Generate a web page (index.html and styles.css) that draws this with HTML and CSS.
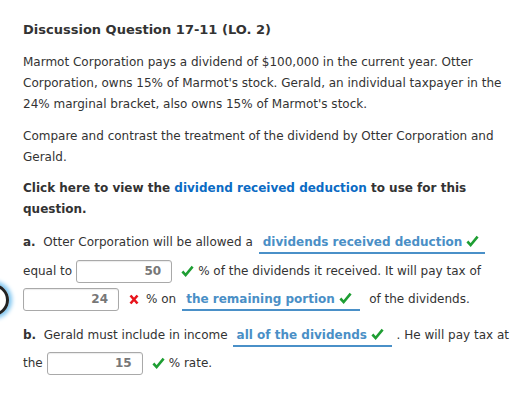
FILE: index.html
```html
<!DOCTYPE html>
<html>
<head>
<meta charset="utf-8">
<link rel="stylesheet" href="styles.css">
</head>
<body>
<div class="focus-ring"></div>
<h1 class="title">Discussion Question 17-11 (LO. 2)</h1>
<p class="para">Marmot Corporation pays a dividend of $100,000 in the current year. Otter Corporation, owns 15% of Marmot's stock. Gerald, an individual taxpayer in the 24% marginal bracket, also owns 15% of Marmot's stock.</p>
<p class="para">Compare and contrast the treatment of the dividend by Otter Corporation and Gerald.</p>
<p class="para bold">Click here to view the <a class="link">dividend received deduction</a> to use for this question.</p>

<div class="row row-a">
  <span><b>a.</b>&nbsp; Otter Corporation will be allowed a</span>
  <span class="dropdown dd-a">dividends received deduction <svg class="check" viewBox="0 0 14 14"><path d="M1.5 7 L5 10.8 L12.5 1.8"/></svg></span>
</div>
<div class="row row-2">
  <span>equal to</span>
  <span class="input in-50">50</span>
  <svg class="check" viewBox="0 0 14 14"><path d="M1.5 7 L5 10.8 L12.5 1.8"/></svg>
  <span>% of the dividends it received. It will pay tax of</span>
</div>
<div class="row row-3">
  <span class="input in-24">24</span>
  <svg class="cross" viewBox="0 0 10 11"><path d="M1.5 1.5 L8.5 9.5 M8.5 1.5 L1.5 9.5"/></svg>
  <span>% on</span>
  <span class="dropdown dd-b">the remaining portion <svg class="check" viewBox="0 0 14 14"><path d="M1.5 7 L5 10.8 L12.5 1.8"/></svg></span>
  <span class="after">of the dividends.</span>
</div>
<div class="row row-b">
  <span><b>b.</b>&nbsp; Gerald must include in income</span>
  <span class="dropdown dd-c">all of the dividends <svg class="check" viewBox="0 0 14 14"><path d="M1.5 7 L5 10.8 L12.5 1.8"/></svg></span>
  <span class="after-b">. He will pay tax at</span>
</div>
<div class="row row-5">
  <span>the</span>
  <span class="input in-15">15</span>
  <svg class="check" viewBox="0 0 14 14"><path d="M1.5 7 L5 10.8 L12.5 1.8"/></svg>
  <span>% rate.</span>
</div>
</body>
</html>
```

FILE: styles.css
```css
html, body {
  margin: 0;
  background: #ffffff;
}
body {
  padding: 20px 20px 0 23px;
  font-family: "DejaVu Sans", Verdana, sans-serif;
  font-size: 12px;
  color: #333333;
  position: relative;
  overflow: hidden;
  height: 419px;
  box-sizing: border-box;
}
.title {
  font-size: 13px;
  font-weight: bold;
  line-height: 20px;
  margin: 0 0 12px 0;
}
.para {
  margin: 0 0 10.5px 0;
  line-height: 21px;
}
.bold {
  font-weight: bold;
  margin-bottom: 11px;
}
.link {
  color: #0b6bc4;
}
.row {
  display: flex;
  align-items: center;
  height: 22px;
  white-space: nowrap;
}
.row-2 { margin-top: 7px; }
.row-3 { margin-top: 6px; }
.row-b { margin-top: 14px; }
.row-5 { margin-top: 6px; }

.dropdown {
  display: inline-flex;
  align-items: center;
  box-sizing: border-box;
  height: 22px;
  padding: 0 4px;
  border-bottom: 2px solid #4a90c8;
  color: #4a8fc6;
  font-weight: bold;
  margin-top: 1px;
}
.dropdown .check { margin-left: 4px; }
.dd-a { width: 226px; margin-left: 6px; }
.dd-b { width: 178px; margin-left: 6px; }
.dd-c { width: 159px; margin-left: 5px; }
.after { margin-left: 9px; }
.after-b { margin-left: 5px; }

.input {
  display: inline-block;
  box-sizing: border-box;
  width: 96px;
  height: 23px;
  line-height: 21px;
  border: 1px solid #a9a9a9;
  border-radius: 3px;
  box-shadow: inset 0 1px 1px rgba(0,0,0,0.08);
  text-align: right;
  padding-right: 10px;
  font-weight: bold;
  color: #777777;
}
.in-50 { margin-left: 4px; }
.in-15 { margin-left: 4px; }

.check {
  width: 13px;
  height: 13px;
  fill: none;
  stroke: #1e9e33;
  stroke-width: 2.8;
  flex: none;
}
.row-2 > .check, .row-5 > .check { margin: 0 4px 0 9px; }
.cross {
  width: 10px;
  height: 11px;
  fill: none;
  stroke: #e8141c;
  stroke-width: 2.6;
  margin: 0 7px 0 10px;
  flex: none;
}

.focus-ring {
  position: absolute;
  left: -23px;
  top: 284px;
  width: 26px;
  height: 26px;
  border: 3px solid #222222;
  border-radius: 50%;
  box-shadow: 0 0 4px 3px #7cc4f0;
}
```
